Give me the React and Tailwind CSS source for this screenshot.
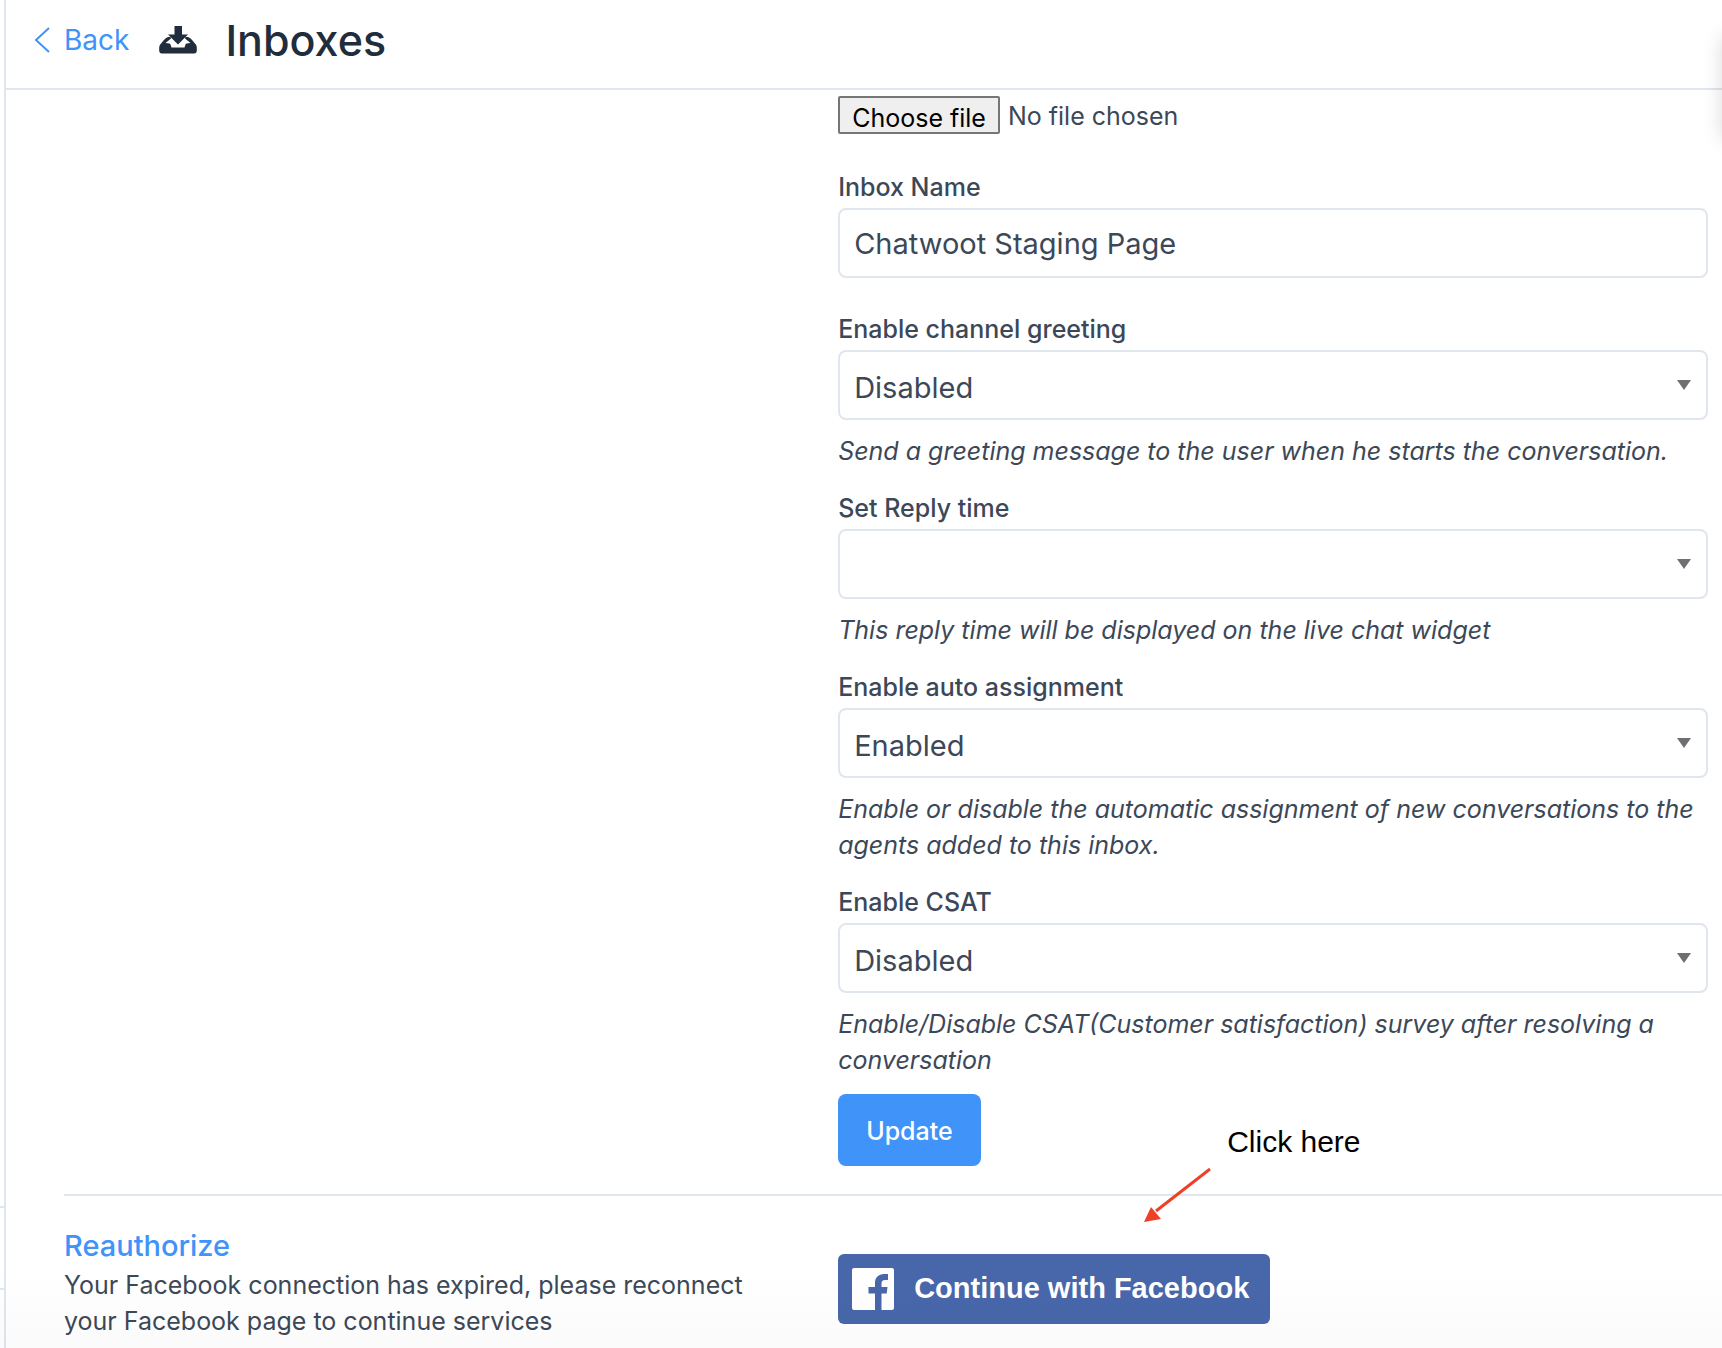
import { useRef, useState } from "react";

function ArchiveIcon() {
  return (
    <svg aria-hidden="true" viewBox="0 0 38 28" className="h-7 w-[38px] shrink-0" fill="currentColor">
      <path d="M15.500 0h7.500v8.500h6L19 18.500 9 8.500h6.500z" />
      <path d="M9 11h2.500l.5 1.500L6.500 17l4 .6q.9.200 1.100 1.100l.9 2.800h13l.9-2.800q.2-.9 1.100-1.100l4-.6L26 12.500l.5-1.500H29q2.300.6 4.500 3.500l3.300 4q1 1.400 1 3v3q0 3-2.800 3H3q-2.800 0-2.800-3v-3q0-1.600 1-3l3.300-4Q6.700 11.600 9 11z" />
    </svg>
  );
}

function FacebookMark() {
  return (
    <svg aria-hidden="true" viewBox="0 0 42 42" className="size-[42px] shrink-0">
      <rect width="42" height="42" rx="2" fill="#fff" />
      <path
        d="M23 42V25.500h-6.500V19H23v-4C23 9.500 26.500 6 32 6h4v6h-3c-2.500 0-3.500 1.200-3.500 3.500V19h6l-.8 6.500h-5.200V42z"
        fill="#4867aa"
      />
    </svg>
  );
}

function SelectField({ id, label, help, options, initial }) {
  const [value, setValue] = useState(initial);
  return (
    <div>
      <label htmlFor={id} className="mb-[3px] block text-[25px] leading-9 font-medium">
        {label}
      </label>
      <div className="relative">
        <select
          id={id}
          value={value}
          onChange={(e) => setValue(e.target.value)}
          className="block h-[70px] w-full appearance-none rounded-lg border-2 border-[#e0e6ed] bg-white pt-1.5 pr-12 pl-3.5 text-[29px]"
        >
          {options.map((o) => (
            <option key={o}>{o}</option>
          ))}
        </select>
        <svg
          aria-hidden="true"
          viewBox="0 0 14 10"
          className="pointer-events-none absolute top-[30px] right-[17px] h-2.5 w-3.5"
        >
          <path d="M0 0h14L7 10z" fill="#6e6f73" />
        </svg>
      </div>
      <p className="mt-[13px] text-[25px] leading-9 italic">{help}</p>
    </div>
  );
}

const FIELDS = [
  {
    id: "greeting",
    label: "Enable channel greeting",
    initial: "Disabled",
    options: ["Enabled", "Disabled"],
    help: "Send a greeting message to the user when he starts the conversation.",
  },
  {
    id: "reply-time",
    label: "Set Reply time",
    initial: "",
    options: ["", "In a few minutes", "In a few hours", "In a day"],
    help: "This reply time will be displayed on the live chat widget",
  },
  {
    id: "auto-assignment",
    label: "Enable auto assignment",
    initial: "Enabled",
    options: ["Enabled", "Disabled"],
    help: "Enable or disable the automatic assignment of new conversations to the agents added to this inbox.",
  },
  {
    id: "csat",
    label: "Enable CSAT",
    initial: "Disabled",
    options: ["Enabled", "Disabled"],
    help: "Enable/Disable CSAT(Customer satisfaction) survey after resolving a conversation",
  },
];

export default function App() {
  const fileRef = useRef(null);
  const [name, setName] = useState("Chatwoot Staging Page");
  return (
    <div className="relative flex min-h-screen overflow-hidden bg-white font-['Inter',sans-serif] text-[#3c4858]">
      <aside className="flex w-1.5 shrink-0 flex-col justify-end border-r-2 border-[#e0e6ed]">
        <div className="mb-[58px] h-[84px] border-y-2 border-[#e0e6ed]" />
      </aside>

      <div className="min-w-0 flex-1">
        <header className="flex h-[90px] items-center border-b-2 border-[#e0e6ed] pb-2 pl-7">
          <a href="#back" className="flex items-center gap-3.5 text-[28px] text-[#4093f9]">
            <svg aria-hidden="true" viewBox="0 0 16 26" className="h-[26px] w-4" fill="none" stroke="currentColor" strokeWidth="2">
              <path d="M15 1 2 13l13 12" />
            </svg>
            Back
          </a>
          <h1 className="ml-[30px] flex items-center gap-7 text-[43px] font-medium text-[#1f2d3d]">
            <ArchiveIcon />
            Inboxes
          </h1>
        </header>

        <main className="pl-[58px]">
          <section className="grid grid-cols-[89fr_100fr] border-b-2 border-[#e0e6ed] pt-1.5 pr-3.5 pb-7">
            <div className="col-start-2">
              <div className="mb-[33px] flex items-start gap-2">
                <button
                  type="button"
                  onClick={() => fileRef.current.click()}
                  className="h-[38px] rounded-xs border-2 border-[#767676] bg-[#efefef] px-3 pt-1 text-[25px] leading-8 text-black"
                >
                  Choose file
                </button>
                <input ref={fileRef} type="file" aria-label="Channel avatar" className="hidden" />
                <span className="text-[25px] leading-10">No file chosen</span>
              </div>

              <label htmlFor="inbox-name" className="mb-[3px] block text-[25px] leading-9 font-medium">
                Inbox Name
              </label>
              <input
                id="inbox-name"
                type="text"
                value={name}
                onChange={(e) => setName(e.target.value)}
                className="mb-[33px] block h-[70px] w-full rounded-lg border-2 border-[#e0e6ed] px-3.5 text-[29px]"
              />

              <div className="flex flex-col gap-[21px]">
                {FIELDS.map((f) => (
                  <SelectField key={f.id} {...f} />
                ))}
              </div>

              <div className="relative mt-4">
                <button type="button" className="h-[72px] rounded-lg bg-[#4093f9] px-7 pt-1 text-[25px] font-medium text-white">
                  Update
                </button>
                <div className="absolute top-[30px] left-[306px]">
                  <p className="ml-[83px] font-['Liberation_Sans',Arial,sans-serif] text-[30px] leading-9 whitespace-nowrap text-black">
                    Click here
                  </p>
                  <svg aria-hidden="true" viewBox="0 0 68 56" className="mt-2 h-14 w-[68px]">
                    <path d="M66 1 12 43" stroke="#ee4026" strokeWidth="3" />
                    <path d="M0 54 7 39l10 12z" fill="#ee4026" />
                  </svg>
                </div>
              </div>
            </div>
          </section>

          <section className="grid grid-cols-[89fr_100fr] pt-[29px] pr-3.5">
            <div className="pr-16">
              <h2 className="text-[29px] leading-[42px] font-medium text-[#4093f9]">Reauthorize</h2>
              <p className="text-[25px] leading-9">
                Your Facebook connection has expired, please reconnect your Facebook page to continue services
              </p>
            </div>
            <div className="pt-[29px]">
              <button
                type="button"
                className="flex h-[70px] items-center gap-5 rounded-md bg-[#4867aa] pr-[21px] pl-3.5 font-['Liberation_Sans',Arial,sans-serif] text-[29px] font-bold text-white"
              >
                <FacebookMark />
                Continue with Facebook
              </button>
            </div>
          </section>
        </main>
      </div>

      <div className="pointer-events-none absolute inset-x-0 bottom-0 h-20 bg-linear-to-b from-transparent to-black/[0.018]" />
      <div className="pointer-events-none absolute top-9 -right-10 h-[104px] w-10 rounded-lg shadow-[0_0_20px_rgba(0,0,0,0.15)]" />
    </div>
  );
}
